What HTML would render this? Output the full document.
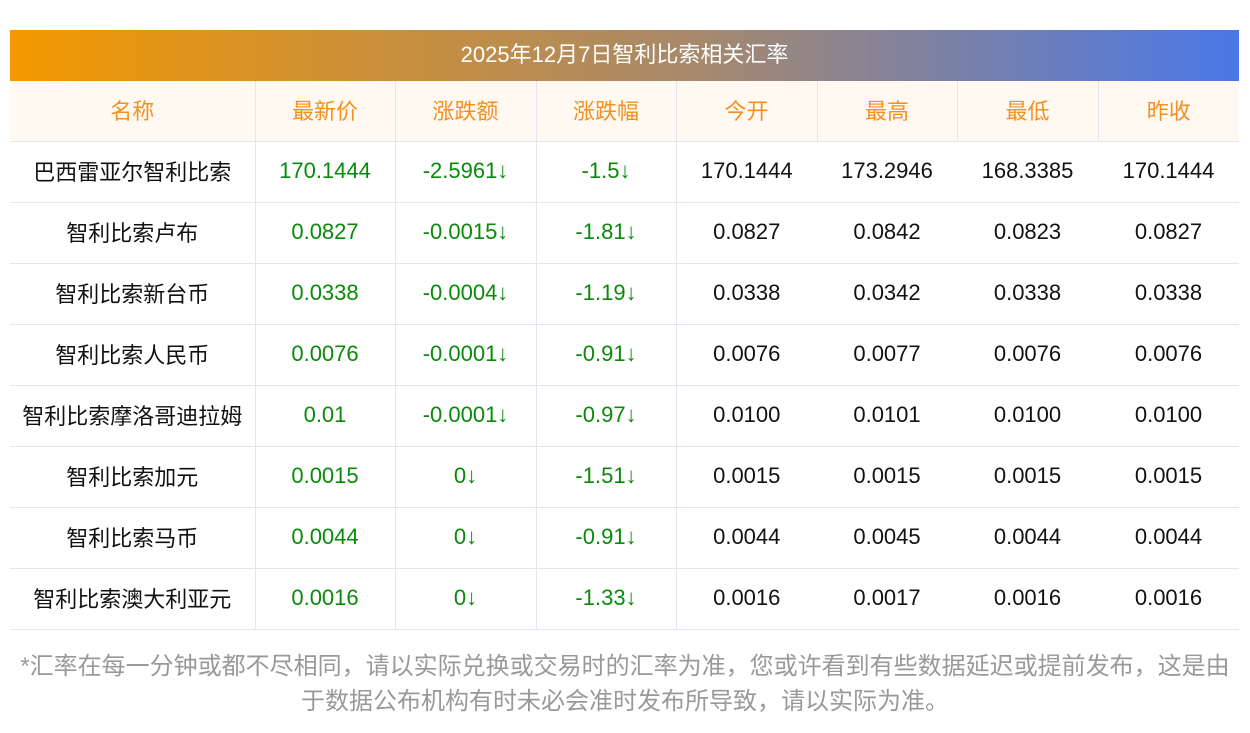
<!DOCTYPE html>
<html><head><meta charset="utf-8"><style>
body{margin:0;background:#fff;font-family:"Liberation Sans","WenQuanYi Zen Hei",sans-serif;}
.wrap{position:absolute;left:10px;top:30px;width:1229px;}
.title{height:51px;line-height:49px;text-align:center;color:#fff;font-size:22px;background:linear-gradient(90deg,#f39800,#a8896a 55%,#4a78e8);}
table{border-collapse:collapse;width:1229px;table-layout:fixed;}
td{height:57px;border-bottom:1px solid #e3e6ee;text-align:center;font-size:22px;padding:0 0 3px 0;color:#111;}
tr.h td{background:#fff9f2;color:#f39020;height:57px;}
td.b{border-right:1px solid #e3e6ee;}
td.g{color:#0a8a0a;}
.note{position:absolute;left:0;top:649px;width:1250px;text-align:center;color:#999;font-size:24px;line-height:35px;}
</style></head><body>
<div class="wrap">
<div class="title">2025年12月7日智利比索相关汇率</div>
<table>
<colgroup><col style="width:245px"><col style="width:140px"><col style="width:141px"><col style="width:140px"><col style="width:141px"><col style="width:140px"><col style="width:141px"><col style="width:141px"></colgroup>
<tr class="h"><td class="b">名称</td><td class="b">最新价</td><td class="b">涨跌额</td><td class="b">涨跌幅</td><td class="b">今开</td><td class="b">最高</td><td class="b">最低</td><td>昨收</td></tr>
<tr><td class="b">巴西雷亚尔智利比索</td><td class="b g">170.1444</td><td class="b g">-2.5961↓</td><td class="b g">-1.5↓</td><td>170.1444</td><td>173.2946</td><td>168.3385</td><td>170.1444</td></tr>
<tr><td class="b">智利比索卢布</td><td class="b g">0.0827</td><td class="b g">-0.0015↓</td><td class="b g">-1.81↓</td><td>0.0827</td><td>0.0842</td><td>0.0823</td><td>0.0827</td></tr>
<tr><td class="b">智利比索新台币</td><td class="b g">0.0338</td><td class="b g">-0.0004↓</td><td class="b g">-1.19↓</td><td>0.0338</td><td>0.0342</td><td>0.0338</td><td>0.0338</td></tr>
<tr><td class="b">智利比索人民币</td><td class="b g">0.0076</td><td class="b g">-0.0001↓</td><td class="b g">-0.91↓</td><td>0.0076</td><td>0.0077</td><td>0.0076</td><td>0.0076</td></tr>
<tr><td class="b">智利比索摩洛哥迪拉姆</td><td class="b g">0.01</td><td class="b g">-0.0001↓</td><td class="b g">-0.97↓</td><td>0.0100</td><td>0.0101</td><td>0.0100</td><td>0.0100</td></tr>
<tr><td class="b">智利比索加元</td><td class="b g">0.0015</td><td class="b g">0↓</td><td class="b g">-1.51↓</td><td>0.0015</td><td>0.0015</td><td>0.0015</td><td>0.0015</td></tr>
<tr><td class="b">智利比索马币</td><td class="b g">0.0044</td><td class="b g">0↓</td><td class="b g">-0.91↓</td><td>0.0044</td><td>0.0045</td><td>0.0044</td><td>0.0044</td></tr>
<tr><td class="b">智利比索澳大利亚元</td><td class="b g">0.0016</td><td class="b g">0↓</td><td class="b g">-1.33↓</td><td>0.0016</td><td>0.0017</td><td>0.0016</td><td>0.0016</td></tr>
</table>
</div>
<div class="note">*汇率在每一分钟或都不尽相同，请以实际兑换或交易时的汇率为准，您或许看到有些数据延迟或提前发布，这是由<br>于数据公布机构有时未必会准时发布所导致，请以实际为准。</div>
</body></html>
